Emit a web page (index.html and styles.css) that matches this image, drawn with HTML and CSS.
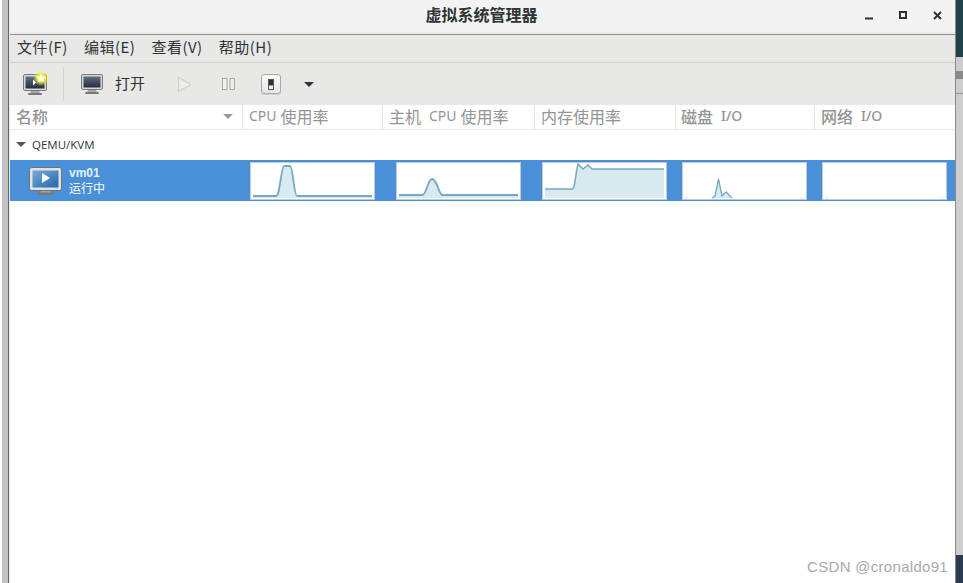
FILE: index.html
```html
<!DOCTYPE html>
<html lang="zh-CN">
<head>
<meta charset="utf-8">
<title>虚拟系统管理器</title>
<link rel="stylesheet" href="styles.css">
</head>
<body>
<div class="desk">
  <aside class="edge-left"></aside>
  <main class="window">
    <header class="titlebar">
      <h1 class="title">虚拟系统管理器</h1>
      <div class="wm">
        <svg class="wm-icon" viewBox="0 0 10 10"><rect x="0" y="6.500" width="8" height="2" fill="#2e3436"/></svg>
        <svg class="wm-icon" viewBox="0 0 10 10"><rect x="1" y="1" width="6" height="6" fill="none" stroke="#2e3436" stroke-width="2"/></svg>
        <svg class="wm-icon" viewBox="0 0 10 10"><path d="M1 1L8 8M8 1L1 8" stroke="#2e3436" stroke-width="2" fill="none"/></svg>
      </div>
    </header>
    <nav class="menubar">
      <span class="menu">文件(F)</span>
      <span class="menu">编辑(E)</span>
      <span class="menu">查看(V)</span>
      <span class="menu">帮助(H)</span>
    </nav>
    <div class="toolbar">
      <span class="tool tool-new">
        <svg width="26" height="24" viewBox="0 0 26 24">
          <defs>
            <radialGradient id="glow"><stop offset="0.45" stop-color="#eeee3a"/><stop offset="1" stop-color="#eeee3a" stop-opacity="0"/></radialGradient>
            <linearGradient id="scr" x1="0" y1="0" x2="0" y2="1"><stop offset="0" stop-color="#5f6f85"/><stop offset="1" stop-color="#252f3d"/></linearGradient>
          </defs>
          <rect x="1.500" y="2.500" width="23" height="16" rx="1.500" fill="#d8d8d6" stroke="#77797a"/>
          <rect x="3.500" y="4.500" width="19" height="12" fill="url(#scr)"/>
          <path d="M11 7.500v6l3-3z" fill="#fff"/>
          <path d="M9 19h8l1 2H8z" fill="#a5a7a7"/>
          <rect x="6" y="21" width="14" height="2" rx="1" fill="#77797a"/>
          <circle cx="19" cy="6" r="8" fill="url(#glow)"/>
          <path d="M19 1.500l1.400 3 3.300.4-2.400 2.200.6 3.200-2.900-1.600-2.900 1.600.6-3.200-2.400-2.200 3.300-.4z" fill="#fffde8"/>
        </svg>
      </span>
      <span class="tool-sep"></span>
      <span class="tool tool-open">
        <svg width="22" height="20" viewBox="0 0 22 20">
          <rect x="0.500" y="0.500" width="21" height="15" rx="1.500" fill="#d8d8d6" stroke="#77797a"/>
          <rect x="2.500" y="2.500" width="17" height="11" fill="url(#scr)"/>
          <path d="M7 16h8l1 2H6z" fill="#a5a7a7"/>
          <rect x="4" y="18" width="14" height="2" rx="1" fill="#77797a"/>
        </svg>
        <span class="tool-label">打开</span>
      </span>
      <svg class="tool-run" width="14" height="15" viewBox="0 0 14 15"><path d="M0.500 0.500L13 7.500L0.500 14.500Z" fill="#ececea" stroke="#c9cbc9"/></svg>
      <svg class="tool-pause" width="13" height="12" viewBox="0 0 13 12"><rect x="0.500" y="0.500" width="4.500" height="11" fill="#efefed" stroke="#a8aaa8"/><rect x="8" y="0.500" width="4.500" height="11" fill="#efefed" stroke="#a8aaa8"/></svg>
      <span class="tool-off"><span class="tool-off-in"></span></span>
      <span class="arrow arrow-tool"></span>
    </div>
    <div class="table-head">
      <div class="th th-name"><span>名称</span><span class="arrow arrow-sort"></span></div>
      <div class="th th-cpu"><span class="lat">CPU</span><span class="sp"></span>使用率</div>
      <div class="th th-host">主机<span class="sp-w"></span><span class="lat">CPU</span><span class="sp"></span>使用率</div>
      <div class="th th-mem">内存使用率</div>
      <div class="th th-disk">磁盘<span class="sp-w"></span><span class="lat">I/O</span></div>
      <div class="th th-net">网络<span class="sp-w"></span><span class="lat">I/O</span></div>
    </div>
    <div class="group"><span class="arrow arrow-group"></span><span>QEMU/KVM</span></div>
    <div class="vm-row">
      <div class="vm-id">
        <svg class="vm-icon" width="33" height="28" viewBox="0 0 33 28">
          <defs><linearGradient id="blue" x1="0" y1="0" x2="1" y2="1"><stop offset="0" stop-color="#78a8d8"/><stop offset="1" stop-color="#2467ab"/></linearGradient></defs>
          <rect x="0.500" y="0.500" width="32" height="23" rx="2" fill="#e0e3e4" stroke="#6f7173"/>
          <rect x="3.500" y="3.500" width="26" height="17" fill="url(#blue)"/>
          <path d="M13 6L21 11L13 16Z" fill="#fff"/>
          <path d="M12 24h9l1 2h-11z" fill="#a5a7a7"/>
          <rect x="8" y="25.500" width="17" height="2.500" rx="1" fill="#77797a"/>
        </svg>
        <div class="vm-text"><strong class="vm-name">vm01</strong><span class="vm-state">运行中</span></div>
      </div>
      <div class="graphs">
        <svg class="graph" viewBox="1 1 123 36"><path d="M3 34H26C30 34 31 5 34 4H40C43 4 44 34 47 34H122V36H3Z" fill="#d8e9f0"/><path d="M3 34H26C30 34 31 5 34 4H40C43 4 44 34 47 34H122" fill="none" stroke="#74a9c2" stroke-width="1.800"/></svg>
        <svg class="graph" viewBox="1 1 123 36"><path d="M3 33H26C31 33 31 18 36 17C41 17 42 30 46 33H122V36H3Z" fill="#d8e9f0"/><path d="M3 33H26C31 33 31 18 36 17C41 17 42 30 46 33H122" fill="none" stroke="#74a9c2" stroke-width="1.800"/></svg>
        <svg class="graph" viewBox="1 1 123 36"><path d="M3 27H30C33 27 33 15 36 2L41 7L46 3L50 7H122V36H3Z" fill="#d8e9f0"/><path d="M3 27H30C33 27 33 15 36 2L41 7L46 3L50 7H122" fill="none" stroke="#74a9c2" stroke-width="1.500"/></svg>
        <svg class="graph graph-near" viewBox="1 1 123 36"><path d="M30 36L33 34L36.500 17L40 34L44 30L50 36Z" fill="#d8e9f0"/><path d="M30 36L33 34L36.500 17L40 34L44 30L50 36" fill="none" stroke="#74a9c2" stroke-width="1.300"/><path d="M3 36H6M118 36H122" stroke="#d8e9f0"/></svg>
        <svg class="graph graph-near" viewBox="1 1 123 36"><path d="M3 36H6M118 36H122" stroke="#d8e9f0"/></svg>
      </div>
    </div>
    <div class="blank"><span class="watermark">CSDN @cronaldo91</span></div>
  </main>
  <aside class="edge-right"></aside>
</div>
</body>
</html>
```
FILE: styles.css
```css
* { box-sizing: border-box; }
html, body { margin: 0; height: 100%; overflow: hidden; }
body { background: #fff; font-family: "Liberation Sans", "Noto Sans CJK SC", sans-serif; }
.desk { display: flex; width: 963px; height: 583px; }
.edge-left { width: 10px; background: linear-gradient(90deg, #fff 0 2px, #c2c2c2 2px 8px, #666 8px 9px, #e8e8e8 9px); }
.edge-right { width: 8px; background: linear-gradient(180deg, #1f4248 0 57px, #cdcdcd 57px 71px, #8a8a8a 71px 79px, #cdcdcd 79px 93px, #999 93px 94px, #cdcdcd 94px 555px, #2b3a4e 555px); border-left: 1px solid #888; }
.window { width: 945px; display: flex; flex-direction: column; background: #fff; flex: none; }
.titlebar { height: 35px; background: #f3f3f3; border-bottom: 1px solid #8f8f87; position: relative; display: flex; justify-content: center; align-items: center; flex: none; box-shadow: inset 0 -2px 0 #ebebeb; }
.title { margin: 0 2px 7px 0; font-size: 16px; font-weight: bold; color: #2e3436; font-family: "Noto Sans CJK SC", sans-serif; line-height: 22px; }
.wm { position: absolute; right: 12px; top: 11px; display: flex; gap: 24px; }
.wm-icon { width: 10px; height: 10px; display: block; }
.menubar { height: 28px; background: #e8e8e6; border-bottom: 1px solid #cfcfcc; display: flex; align-items: center; gap: 16px; padding: 0 0 3px 7px; flex: none; }
.menu { font-size: 15px; color: #2e3436; font-family: "Noto Sans CJK SC", sans-serif; line-height: 20px; letter-spacing: 0.500px; }
.toolbar { height: 42px; background: #e8e8e6; display: flex; align-items: center; padding-left: 12px; flex: none; }
.tool { display: flex; align-items: center; }
.tool-sep { width: 1px; height: 34px; background: #d2d2cf; margin: 0 17px 0 15px; }
.tool-label { font-size: 15px; color: #2e3436; margin: 0 0 2px 12px; font-family: "Noto Sans CJK SC", sans-serif; line-height: 20px; }
.tool-run { margin-left: 33px; }
.tool-pause { margin-left: 30px; }
.tool-off { width: 20px; height: 20px; margin-left: 26px; background: linear-gradient(#fafaf9, #e6e6e4); border: 1px solid #a8a8a6; border-radius: 3px; display: flex; align-items: center; justify-content: center; box-shadow: 0 1px 0 #cfcfcc; }
.tool-off-in { width: 6px; height: 11px; background: linear-gradient(#2e3436 0 50%, #eee 70%); border: 1px solid #555; }
.arrow { width: 0; height: 0; border-style: solid; border-color: #2e3436 transparent transparent; border-width: 5px 5px 0; display: block; }
.arrow-tool { margin-left: 23px; }
.table-head { height: 25px; display: flex; background: #fff; border-bottom: 1px solid #e6e6e6; flex: none; }
.th { font-size: 16px; color: #929595; font-family: "Noto Sans CJK SC", sans-serif; display: flex; align-items: center; padding: 0 0 2px 6px; border-left: 1px solid #e6e6e6; white-space: nowrap; line-height: 20px; }
.lat { font-size: 14px; font-family: "Noto Sans", sans-serif; }
.sp { width: 4px; }
.sp-w { width: 8px; }
.th-name { width: 232px; border-left: 0; justify-content: space-between; padding-right: 9px; font-weight: 500; }
.th-cpu { width: 140px; }
.th-host { width: 152px; }
.th-mem { width: 141px; }
.th-disk { width: 139px; font-weight: 500; padding-left: 5px; }
.th-net { flex: 1; font-weight: 500; }
.arrow-sort { border-top-color: #999; }
.group { height: 30px; display: flex; align-items: center; gap: 6px; padding: 0 0 1px 6px; font-size: 11.500px; color: #2e3436; flex: none; font-family: "Open Sans", sans-serif; }
.arrow-group { border-top-color: #555; }
.vm-row { height: 41px; background: #4a90d9; display: flex; flex: none; }
.vm-id { width: 240px; display: flex; align-items: center; padding: 0 0 0 19px; flex: none; }
.vm-icon { display: block; flex: none; }
.vm-text { display: flex; flex-direction: column; margin-left: 7px; color: #fff; font-size: 12px; line-height: 15px; font-family: "Noto Sans CJK SC", sans-serif; }
.vm-name { font-family: "Liberation Sans", sans-serif; font-weight: bold; font-size: 12px; color: #e4effa; }
.vm-state { margin-top: -1px; }
.graphs { display: flex; align-items: center; flex: none; width: 697px; }
.graph { width: 125px; height: 38px; background: #fff; border: 1px solid #c3c8d2; display: block; flex: none; margin-right: 21px; }
.graph-near { margin-right: 15px; }
.graph:nth-child(3) { margin-right: 15px; }
.blank { flex: 1; position: relative; background: #fff; }
.watermark { position: absolute; right: 7px; bottom: 8px; font-size: 15px; color: #a9a9a9; letter-spacing: 0.300px; }
```
